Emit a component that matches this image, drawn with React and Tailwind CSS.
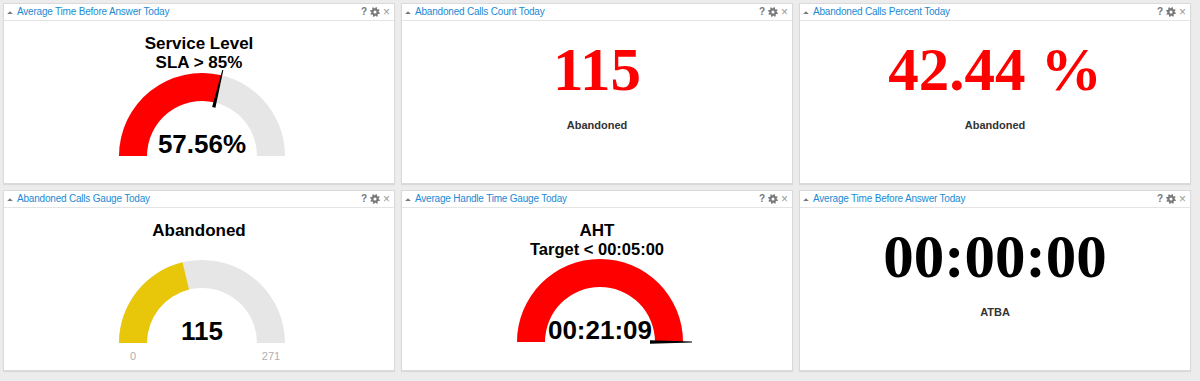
import React from 'react'

const R = 83
const r = 55
const CX = 100
const CY = 86

function polar(rad, p) {
  const a = Math.PI * (1 - p)
  return [CX + rad * Math.cos(a), CY - rad * Math.sin(a)]
}

function band(p0, p1) {
  const [x0, y0] = polar(R, p0)
  const [x1, y1] = polar(R, p1)
  const [x2, y2] = polar(r, p1)
  const [x3, y3] = polar(r, p0)
  return `M${x0} ${y0} A${R} ${R} 0 0 1 ${x1} ${y1} L${x2} ${y2} A${r} ${r} 0 0 0 ${x3} ${y3} Z`
}

function needle(p) {
  const a = Math.PI * (1 - p)
  const ux = Math.cos(a)
  const uy = -Math.sin(a)
  const nx = -uy
  const ny = ux
  const b0 = 50
  const b1 = 92
  const pts = [
    [CX + ux * b0 + nx * 1.7, CY + uy * b0 + ny * 1.7],
    [CX + ux * b1 + nx * 0.4, CY + uy * b1 + ny * 0.4],
    [CX + ux * b1 - nx * 0.4, CY + uy * b1 - ny * 0.4],
    [CX + ux * b0 - nx * 1.7, CY + uy * b0 - ny * 1.7],
  ]
  return pts.map(q => q.join(',')).join(' ')
}

function Gauge({ value, fill, color, mark, min, max }) {
  return (
    <div className="relative w-[200px] h-[106px]">
      <svg width="200" height="106" viewBox="0 0 200 106">
        <path d={band(0, 1)} fill="#e6e6e6" />
        {fill > 0 && <path d={band(0, fill)} fill={color} />}
        {mark != null && <polygon points={needle(mark)} fill="#000" />}
        {min != null && (
          <text x={CX - 69} y={CY + 17} textAnchor="middle" fontSize="11" fill="#b0b0b0" fontFamily="Liberation Sans, Arial, sans-serif">{min}</text>
        )}
        {max != null && (
          <text x={CX + 69} y={CY + 17} textAnchor="middle" fontSize="11" fill="#b0b0b0" fontFamily="Liberation Sans, Arial, sans-serif">{max}</text>
        )}
      </svg>
      <div className="absolute left-0 right-0 top-[61px] text-center text-[26px] leading-[26px] font-bold text-black">
        {value}
      </div>
    </div>
  )
}

// small filled cog like the portal's widget toolbar
function gearPoints() {
  const pts = []
  const n = 8
  for (let i = 0; i < n * 4; i++) {
    const a = (i / (n * 4)) * Math.PI * 2
    const rad = i % 4 < 2 ? 5 : 3.7
    pts.push(`${5 + rad * Math.cos(a + 0.2)},${5 + rad * Math.sin(a + 0.2)}`)
  }
  return pts.join(' ')
}

function Gear() {
  return (
    <svg width="10" height="10" viewBox="0 0 10 10">
      <polygon points={gearPoints()} fill="#7a7a7a" />
      <circle cx="5" cy="5" r="1.5" fill="#fff" />
    </svg>
  )
}

function Panel({ title, children }) {
  return (
    <div className="flex flex-col bg-white border border-[#dadada] shadow-[0_1px_1px_rgba(0,0,0,0.08)]">
      <div className="h-[17px] flex items-center border-b border-[#e4e4e4] pl-[3px] pr-[4px]">
        <svg width="6" height="5" viewBox="0 0 6 5" className="mr-[4px]">
          <polygon points="3,1.2 5.8,4 0.2,4" fill="#777" />
        </svg>
        <span className="text-[10px] tracking-[-0.2px] text-[#1b8ad3] leading-none">{title}</span>
        <div className="ml-auto flex items-center gap-[3px] text-[#777]">
          <span className="text-[10px] font-bold leading-none">?</span>
          <Gear />
          <span className="text-[12px] leading-none text-[#9a9a9a]">×</span>
        </div>
      </div>
      <div className="flex-1 flex flex-col items-center">{children}</div>
    </div>
  )
}

function BigNumber({ value, color, label }) {
  return (
    <>
      <div className={`pt-[18px] font-['Liberation_Serif',serif] font-bold text-[61px] leading-[61px] ${color}`}>
        {value}
      </div>
      <div className="mt-[19px] text-[11px] leading-[13px] font-bold text-[#333]">{label}</div>
    </>
  )
}

export default function App() {
  return (
    <div className="w-[1200px] h-[381px] bg-[#ececec] pt-[3px] pl-[3px] font-['Liberation_Sans',Arial,sans-serif] overflow-hidden">
      <div className="grid grid-cols-[392px_392px_392px] grid-rows-[181px_181px] gap-[6px]">
        <Panel title="Average Time Before Answer Today">
          <div className="pt-[13px] text-[17px] leading-[19px] font-bold text-black text-center">
            <div>Service Level</div>
            <div>SLA &gt; 85%</div>
          </div>
          <div className="-mt-[2px] ml-[6px]">
            <Gauge value="57.56%" fill={0.5756} color="#ff0000" mark={0.5756} />
          </div>
        </Panel>
        <Panel title="Abandoned Calls Count Today">
          <BigNumber value="115" color="text-[#ff0000]" label="Abandoned" />
        </Panel>
        <Panel title="Abandoned Calls Percent Today">
          <BigNumber value="42.44 %" color="text-[#ff0000]" label="Abandoned" />
        </Panel>
        <Panel title="Abandoned Calls Gauge Today">
          <div className="pt-[13px] text-[17px] leading-[19px] font-bold text-black text-center">
            <div>Abandoned</div>
          </div>
          <div className="mt-[17px] ml-[6px]">
            <Gauge value="115" fill={115 / 271} color="#e8c60a" min="0" max="271" />
          </div>
        </Panel>
        <Panel title="Average Handle Time Gauge Today">
          <div className="pt-[13px] text-[17px] leading-[19px] font-bold text-black text-center">
            <div>AHT</div>
            <div className="text-[16.5px]">Target &lt; 00:05:00</div>
          </div>
          <div className="-mt-[3px] ml-[6px]">
            <Gauge value="00:21:09" fill={1} color="#ff0000" mark={1} />
          </div>
        </Panel>
        <Panel title="Average Time Before Answer Today">
          <BigNumber value="00:00:00" color="text-black" label="ATBA" />
        </Panel>
      </div>
    </div>
  )
}
